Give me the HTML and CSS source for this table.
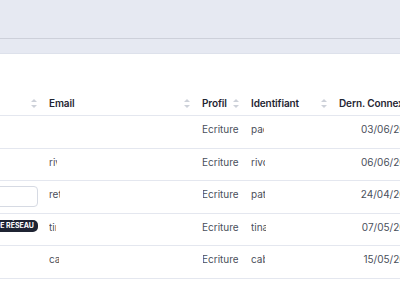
FILE: index.html
```html
<!DOCTYPE html>
<html>
<head>
    <title>Utilisateurs</title>
    <link rel="stylesheet" href="styles.css">
</head>
<body>
    <div class="topbar"></div>
    <div class="subbar"></div>

    <div class="content">
        <div class="grid head">
            <div class="th"><span></span><i class="sort"></i></div>
            <div class="th"><span>Email</span><i class="sort"></i></div>
            <div class="th"><span>Profil</span><i class="sort"></i></div>
            <div class="th"><span>Identifiant</span><i class="sort"></i></div>
            <div class="th"><span>Dern. Connexion</span></div>
        </div>

        <div class="grid row">
            <div class="td"></div>
            <div class="td"></div>
            <div class="td">Ecriture</div>
            <div class="td"><span class="clip" style="width: 13px">pacome</span></div>
            <div class="td date">03/06/2024</div>
        </div>

        <div class="grid row">
            <div class="td"></div>
            <div class="td"><span class="clip" style="width: 8px">rivoire</span></div>
            <div class="td">Ecriture</div>
            <div class="td"><span class="clip" style="width: 14px">rivoire</span></div>
            <div class="td date">06/06/2024</div>
        </div>

        <div class="grid row">
            <div class="td first"><span class="field"></span></div>
            <div class="td"><span class="clip" style="width: 11px">retif</span></div>
            <div class="td"><span class="cut">Ecriture</span></div>
            <div class="td"><span class="clip" style="width: 14px">patrice</span></div>
            <div class="td date">24/04/2024</div>
        </div>

        <div class="grid row">
            <div class="td first"><span class="badge">ADMINISTRATEUR DE RÉSEAU</span></div>
            <div class="td"><span class="clip" style="width: 7px">tirel</span></div>
            <div class="td">Ecriture</div>
            <div class="td"><span class="clip" style="width: 15px">tinaud</span></div>
            <div class="td date">07/05/2024</div>
        </div>

        <div class="grid row">
            <div class="td"></div>
            <div class="td"><span class="clip" style="width: 10px">cabrol</span></div>
            <div class="td"><span class="cut">Ecriture</span></div>
            <div class="td"><span class="clip" style="width: 14px">cabrol</span></div>
            <div class="td date">15/05/2024</div>
        </div>
    </div>
</body>
</html>
```

FILE: styles.css
```css
* {
    margin: 0;
    padding: 0;
    box-sizing: border-box;
}

body {
    font-family: 'Inter', sans-serif;
    font-size: 10px;
    color: #4a4f5b;
    background: white;
    overflow: hidden;
    width: 400px;
}

.topbar {
    height: 39px;
    background: #e6e9f2;
    border-bottom: 1px solid #cdd0da;
}

.subbar {
    height: 15px;
    background: #e6e9f2;
    border-bottom: 1px solid #dde1eb;
}

.content {
    padding-top: 35px;
    width: 440px;
}

.grid {
    display: grid;
    grid-template-columns: 42px 153px 49px 88px 108px;
    border-bottom: 1px solid #e4e7ef;
}

.head {
    height: 27px;
}

.th {
    display: flex;
    align-items: center;
    justify-content: space-between;
    padding: 2px 5px 0 7px;
    font-weight: 600;
    color: #1f2532;
    white-space: nowrap;
    letter-spacing: -0.1px;
}

.sort {
    width: 6px;
    height: 9px;
    position: relative;
}

.sort::before,
.sort::after {
    content: "";
    position: absolute;
    left: 0;
    border-left: 3px solid transparent;
    border-right: 3px solid transparent;
}

.sort::before {
    top: 0;
    border-bottom: 3.5px solid #cdd1d9;
}

.sort::after {
    bottom: 0;
    border-top: 3.5px solid #cdd1d9;
}

.row {
    height: 32.5px;
}

.td {
    padding: 6px 0 0 7px;
    line-height: 14px;
    white-space: nowrap;
    overflow: hidden;
}

.td.first {
    display: flex;
    justify-content: flex-end;
    padding: 0 4px 0 0;
}

.td.date {
    text-align: right;
    padding-right: 22px;
}

.clip {
    display: inline-block;
    overflow: hidden;
    vertical-align: top;
}

.cut {
    display: inline-block;
    clip-path: inset(0 0 0 1px);
}

.field {
    flex-shrink: 0;
    width: 90px;
    height: 21px;
    margin-top: 5px;
    border: 1px solid #d6dae3;
    border-radius: 4px;
    background: white;
}

.badge {
    flex-shrink: 0;
    height: 12px;
    margin-top: 6.5px;
    padding: 0 4px;
    border-radius: 5px;
    background: #1f2433;
    color: white;
    font-size: 7px;
    font-weight: 700;
    line-height: 12px;
}
```
